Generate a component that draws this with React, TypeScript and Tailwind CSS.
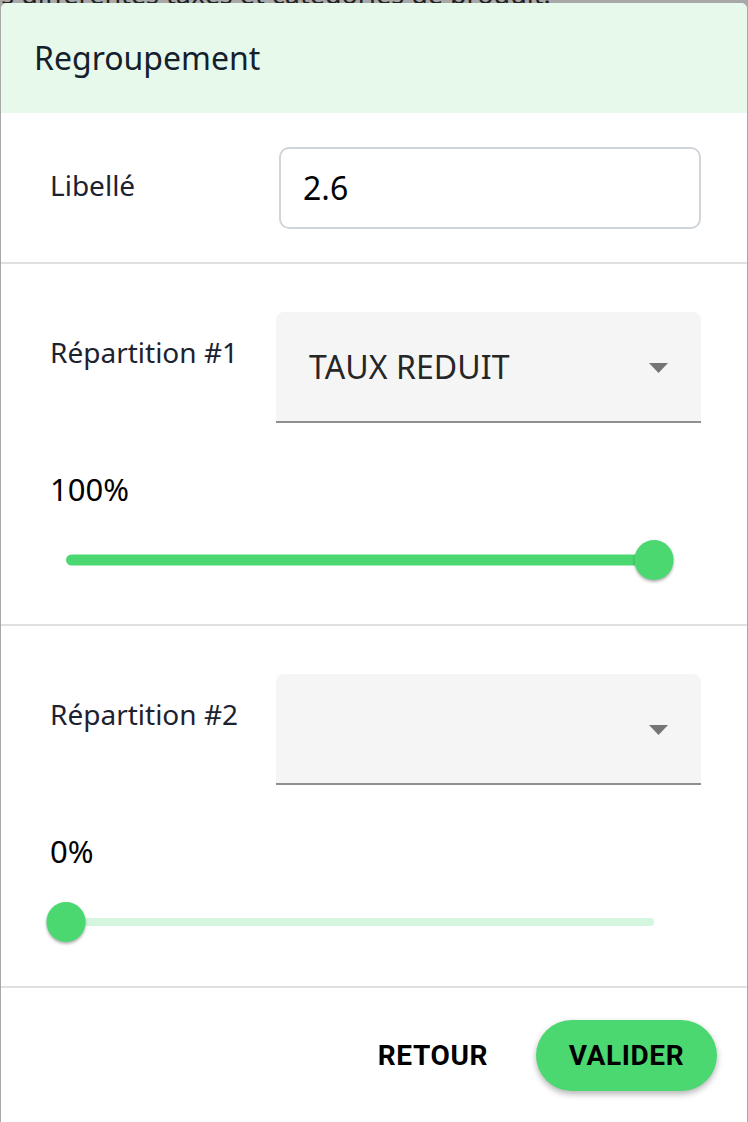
import React from "react";

const font = { fontFamily: '"Noto Sans", "Open Sans", sans-serif' };

function Select({ value }: { value: string }) {
  return (
    <div className="w-[425px] h-[111px] bg-[#f5f5f5] rounded-t-[8px] border-b-2 border-[#8f8f8f] flex items-center justify-between pl-[33px] pr-[33px]">
      <span className="text-[32px] text-[#262626] tracking-[0.1px]">{value}</span>
      <svg width="19" height="10" viewBox="0 0 19 10" className="mt-[2px]">
        <path d="M0 0 L19 0 L9.5 10 Z" fill="#757575" />
      </svg>
    </div>
  );
}

function Slider({ value }: { value: number }) {
  const full = value >= 100;
  return (
    <div className="relative h-[40px] ml-[16px] w-[588px]">
      <div
        className={
          "absolute left-0 right-0 top-1/2 -translate-y-1/2 rounded-full " +
          (full ? "h-[11px] bg-[#4cd871]" : "h-[8px] bg-[#d4f5de]")
        }
      />
      <div
        className="absolute top-1/2 w-[39px] h-[40px] rounded-full bg-[#4cd871] shadow-[0_2px_3px_rgba(0,0,0,0.3)]"
        style={{ left: `${value}%`, transform: "translate(-50%, -50%)" }}
      />
    </div>
  );
}

function Repartition({ label, value, pct }: { label: string; value: string; pct: number }) {
  return (
    <div className="pt-[48px] pl-[49px] pr-[46px] pb-[44px]">
      <div className="flex items-start justify-between">
        <span className="text-[28px] text-[#1c2230] mt-[19px]">{label}</span>
        <Select value={value} />
      </div>
      <div className="mt-[51px] text-[31px] text-black leading-[30px]">{pct}%</div>
      <div className="mt-[36px]">
        <Slider value={pct} />
      </div>
    </div>
  );
}

export default function App() {
  return (
    <div className="w-[748px] h-[1122px] bg-[#a8a8a8] overflow-hidden flex flex-col" style={font}>
      <div className="h-[3px] overflow-hidden relative shrink-0">
        <div className="absolute left-[-14px] bottom-[-7px] text-[27px] text-[#222] whitespace-nowrap leading-[32px]">
          es différentes taxes et catégories de produit.
        </div>
      </div>
      <div className="ml-[1px] w-[746px] flex-1 bg-white rounded-t-[6px] overflow-hidden flex flex-col">
        <div className="h-[110px] bg-[#e6f9eb] pl-[33px] flex items-center shrink-0">
          <span className="text-[32px] text-[#14202b]">Regroupement</span>
        </div>
        <div className="pt-[34px] pb-[33px] pl-[49px] pr-[46px] flex items-center justify-between">
          <span className="text-[28px] text-[#1c2230] -mt-[6px]">Libellé</span>
          <div className="w-[422px] h-[82px] border-2 border-[#d0d5da] rounded-[10px] flex items-center pl-[22px]">
            <span className="text-[32px] text-black">2.6</span>
          </div>
        </div>
        <div className="h-[2px] bg-[#e0e0e0]" />
        <Repartition label="Répartition #1" value="TAUX REDUIT" pct={100} />
        <div className="h-[2px] bg-[#e0e0e0]" />
        <Repartition label="Répartition #2" value="" pct={0} />
        <div className="h-[2px] bg-[#e0e0e0]" />
        <div className="pt-[32px] pr-[30px] flex items-center justify-end gap-[48px]" style={{ fontFamily: 'Roboto, "Liberation Sans", sans-serif' }}>
          <span className="text-[28px] font-bold text-black tracking-[0.6px]">RETOUR</span>
          <div className="w-[181px] h-[71px] rounded-full bg-[#4cd871] shadow-[0_3px_6px_rgba(0,0,0,0.3)] flex items-center justify-center">
            <span className="text-[28px] font-bold text-black tracking-[0.6px]">VALIDER</span>
          </div>
        </div>
      </div>
    </div>
  );
}
